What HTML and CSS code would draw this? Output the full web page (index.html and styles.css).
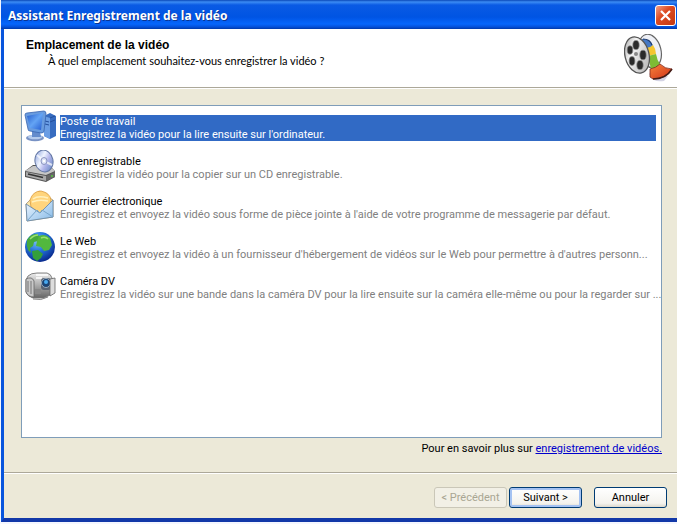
FILE: index.html
```html
<!doctype html>
<html lang="fr" >
<head>
<meta charset="utf-8" >
<meta name="viewport" content="width=device-width,initial-scale=1" >
<title>Assistant Enregistrement de la vidéo</title>
<link rel="stylesheet" href="styles.css" >
</head>
<body>

	<main class="wizard" >

		<div class="titlebar" >
			<h1>Assistant Enregistrement de la vidéo</h1>
			<button class="close" type="button" aria-label="Fermer" >
				<svg viewBox="0 0 21 21" width="21" height="21" ><path d="M6 6l9 9M15 6l-9 9" stroke="#fff" stroke-width="2.2" /></svg>
			</button>
		</div>

		<header class="banner" >
			<div class="heading" >
				<h2>Emplacement de la vidéo</h2>
				<p>À quel emplacement souhaitez-vous enregistrer la vidéo ?</p>
			</div>
			<svg class="logo" viewBox="0 0 50 50" width="50" height="50" >
				<defs>
					<linearGradient id="reel" x1="0" y1="0" x2="1" y2="1" ><stop offset="0" stop-color="#999" /><stop offset=".35" stop-color="#f4f4f4" /><stop offset="1" stop-color="#aaa" /></linearGradient>
					<linearGradient id="red" x1="0" y1="0" x2="1" y2="1" ><stop offset="0" stop-color="#f8843c" /><stop offset="1" stop-color="#d03018" /></linearGradient>
				</defs>
				<path d="M25 40q4 9 15 7l4-5-16-6z" fill="#d4d4e4" />
				<ellipse cx="26" cy="17" rx="11" ry="17" transform="rotate(-14 26 17)" fill="#eef0f6" stroke="#666" stroke-width="1.2" />
				<path d="M18 5q8-1 11 7l-3 6-8-6z" fill="#4478c4" />
				<path d="M19 5q7 0 9 6" fill="none" stroke="#1c3768" stroke-width="1.2" />
				<path d="M22 14q4 0 7-3 3 4 3 9l-8 2z" fill="#f4c630" />
				<path d="M24 22l8-2q1 6 4 10-4 4-9 5z" fill="#7dbb34" />
				<path d="M26 35q6-1 10-5 5 5 12 5-6 10-19 10l-3-2z" fill="url(#red)" stroke="#7c281c" stroke-width=".8" />
				<path d="M48 35q-6 10-19 10" fill="none" stroke="#461e18" stroke-width="1.6" />
				<ellipse cx="13" cy="21" rx="12" ry="18.5" transform="rotate(-14 13 21)" fill="url(#reel)" stroke="#555" stroke-width="1.3" />
				<g fill="#2b2b2b" stroke="#888" stroke-width=".7" >
					<ellipse cx="12" cy="11" rx="3.2" ry="4.6" /><ellipse cx="6" cy="16" rx="2.8" ry="4.2" />
					<ellipse cx="19" cy="21" rx="3.2" ry="4.8" /><ellipse cx="8" cy="27" rx="2.9" ry="4.4" />
					<ellipse cx="16" cy="31" rx="3.2" ry="4.6" />
				</g>
				<circle cx="12" cy="20" r="2" fill="#888" />
			</svg>
		</header>

		<form class="page" >

			<div class="places" role="radiogroup" aria-label="Emplacement de la vidéo" >

				<label class="place" >
					<input type="radio" name="place" checked >
					<svg viewBox="0 0 32 32" width="32" height="32" >
						<defs><linearGradient id="screen" x1="0" y1="0" x2="1" y2="1" ><stop offset="0" stop-color="#245ccc" /><stop offset=".5" stop-color="#64a4f4" /><stop offset="1" stop-color="#235bd0" /></linearGradient></defs>
						<path d="M20 6l6-3 6 3v20l-6 3-6-3z" fill="#376cc0" /><path d="M20 6l6 2v21l-6-3z" fill="#6a9de4" />
						<path d="M26 8l5-2M21 11l4 1M21 14l4 1M26 12l5-2" stroke="#244f9c" />
						<ellipse cx="11" cy="28" rx="9" ry="3.3" fill="#7892c4" /><ellipse cx="11" cy="27" rx="7" ry="2.3" fill="#b4cbed" />
						<path d="M8 21l8 1 1 5H8z" fill="#648ccc" />
						<path d="M1 5q0-2 2-2l17-2q2 0 2 3l-2 17q0 2-3 2L6 21q-2 0-2-2z" fill="#699cdf" stroke="#3864b0" stroke-width=".8" />
						<path d="M3 6l16-3-2 17-11-2z" fill="url(#screen)" />
					</svg>
					<span class="text" ><span class="name" >Poste de travail</span><span class="hint" >Enregistrez la vidéo pour la lire ensuite sur l'ordinateur.</span></span>
				</label>

				<label class="place" >
					<input type="radio" name="place" >
					<svg viewBox="0 0 32 32" width="32" height="32" >
						<defs><linearGradient id="disc" x1="0" y1="0" x2="1" y2="1" ><stop offset="0" stop-color="#7c94d8" /><stop offset=".4" stop-color="#eff4ff" /><stop offset=".6" stop-color="#b5b8ec" /><stop offset="1" stop-color="#527bb8" /></linearGradient></defs>
						<path d="M1 21l8-6h16l6 6v6l-9 5-21-5z" fill="#555" />
						<path d="M1 21l8-5h16l6 5-9 4z" fill="#c6c6c6" />
						<path d="M2 22l20 4v5L2 26z" fill="#aaa" /><path d="M4 24l15 3.5" stroke="#333" stroke-width="1.5" />
						<path d="M22 26l9-4v5l-9 4z" fill="#666" />
						<ellipse cx="20" cy="11" rx="9" ry="11" transform="rotate(-12 20 11)" fill="url(#disc)" stroke="#6478a4" />
						<path d="M20 11L13 5M20 11l8 4" stroke="#fff" stroke-width="2" opacity=".7" />
						<ellipse cx="20" cy="11" rx="3" ry="3.5" fill="#dde3f6" stroke="#8a94c0" /><circle cx="20" cy="11" r="1.2" fill="#fff" />
						<circle cx="28" cy="26" r="1" fill="#58c840" />
					</svg>
					<span class="text" ><span class="name" >CD enregistrable</span><span class="hint" >Enregistrer la vidéo pour la copier sur un CD enregistrable.</span></span>
				</label>

				<label class="place" >
					<input type="radio" name="place" >
					<svg viewBox="0 0 32 32" width="32" height="32" >
						<defs><linearGradient id="mail" x1="0" y1="0" x2="1" y2="1" ><stop offset="0" stop-color="#f1f8ff" /><stop offset="1" stop-color="#86bae8" /></linearGradient></defs>
						<path d="M2 14L15 1l14 9v17L3 31z" fill="#f8e4a8" stroke="#a89470" stroke-width=".8" />
						<path d="M6 10q3-9 11-9 9 2 10 9l-2 7-9 6-9-6z" fill="#ffd47c" stroke="#d99b40" stroke-width=".8" />
						<path d="M9 9q5-4 15-1M8 12q7-3 16-1" fill="none" stroke="#fff0be" stroke-width="1.5" />
						<path d="M2 14l14 9 13-13v17L3 31z" fill="url(#mail)" stroke="#6c8caa" stroke-width=".9" />
						<path d="M3 31l10-11 3 3 2-3 11 7" fill="none" stroke="#78a6cc" />
					</svg>
					<span class="text" ><span class="name" >Courrier électronique</span><span class="hint" >Enregistrez et envoyez la vidéo sous forme de pièce jointe à l'aide de votre programme de messagerie par défaut.</span></span>
				</label>

				<label class="place" >
					<input type="radio" name="place" >
					<svg viewBox="0 0 32 32" width="32" height="32" >
						<defs><radialGradient id="globe" cx=".4" cy=".3" r=".7" ><stop offset="0" stop-color="#7cc4fc" /><stop offset=".5" stop-color="#2473dc" /><stop offset="1" stop-color="#0a2c90" /></radialGradient></defs>
						<circle cx="16" cy="17" r="15" fill="url(#globe)" />
						<path d="M3 10q4-7 10-6l3 3-2 4-4 1-1 4-3 2 1 5-3-3q-2-5-1-10z" fill="#46aa3c" />
						<path d="M15 6q6-3 11 2l2 7-3 5-5 1-3-4-5-1 1-5z" fill="#52b83e" />
						<path d="M8 21l6-1 5 4-2 4-4 3-4-3z" fill="#34a03a" />
						<path d="M6 9q4-4 8-4M17 8q4-2 7 1" fill="none" stroke="#9ae070" stroke-width="1.4" />
					</svg>
					<span class="text" ><span class="name" >Le Web</span><span class="hint" >Enregistrez et envoyez la vidéo à un fournisseur d'hébergement de vidéos sur le Web pour permettre à d'autres personn...</span></span>
				</label>

				<label class="place" >
					<input type="radio" name="place" >
					<svg viewBox="0 0 32 32" width="32" height="32" >
						<defs><linearGradient id="body" x1="0" y1="0" x2="0" y2="1" ><stop offset="0" stop-color="#ececec" /><stop offset=".5" stop-color="#aaa" /><stop offset="1" stop-color="#666" /></linearGradient></defs>
						<path d="M4 6q3-3 9-3h10q4 1 5 5v16l-8 4H9q-6-2-7-6V10z" fill="url(#body)" stroke="#777" stroke-width=".9" />
						<path d="M2 9q6-3 8 2v16q-6 0-8-5z" fill="#c8c8c8" stroke="#666" stroke-width=".8" />
						<path d="M4 11v11M7 11v13" stroke="#777" />
						<path d="M12 5h12M12 8h6" stroke="#fff" stroke-width="1.5" />
						<rect x="17" y="8" width="10" height="12" rx="3" fill="#5b6472" /><circle cx="22" cy="13" r="4.5" fill="#1c4474" stroke="#9ab" /><circle cx="22" cy="12" r="2" fill="#48aaf0" />
						<path d="M26 9l5-1v15l-5 3z" fill="#ddd" stroke="#666" stroke-width=".8" /><path d="M11 19h6v5h-6z" fill="#888" />
						<path d="M9 29q8 2 15-2" fill="none" stroke="#888" />
					</svg>
					<span class="text" ><span class="name" >Caméra DV</span><span class="hint" >Enregistrez la vidéo sur une bande dans la caméra DV pour la lire ensuite sur la caméra elle-même ou pour la regarder sur ...</span></span>
				</label>

			</div>

			<p class="more" >Pour en savoir plus sur <a href="#" >enregistrement de vidéos.</a></p>

			<div class="actions" >
				<button type="button" disabled >&lt; Précédent</button>
				<button type="button" class="default" >Suivant &gt;</button>
				<button type="button" class="cancel" >Annuler</button>
			</div>

		</form>

	</main>

</body>
</html>
```
FILE: styles.css
```css
* { box-sizing: border-box; }

body { background: #f4f6ff; color: #000; font: 11px/13px Roboto, sans-serif; margin: 0; padding: 0 0 2px 1px; }
h1, h2, p { margin: 0; }
button { font: 11px/14px Roboto, sans-serif; }

.wizard { background: #ece9d8; border-bottom: 4px solid #1238a8; border-left: 3px solid #0855dd; display: flex; flex-direction: column; height: calc(100vh - 2px); min-height: 380px; }

.titlebar { align-items: center; background: linear-gradient(#0a48b8, #3c8cf4 2px, #0a5ae4 5px, #0054e3 17px, #0666fc 24px, #0450d8 27px, #0038a8); display: flex; height: 29px; justify-content: space-between; margin-left: -3px; padding: 2px 1px 0 7px; }
.titlebar h1 { color: #fff; font: bold 12px/16px "Noto Sans", sans-serif; text-shadow: 1px 1px #0c3490; }
.close { background: linear-gradient(135deg, #f0a088, #dd4c24 40%, #c43810); border: 1px solid #fff; border-radius: 3px; height: 21px; padding: 0; width: 21px; }
.close svg { display: block; margin: -1px; }

.banner { background: #fff; border-bottom: 1px solid #aca899; box-shadow: 0 1px #fff; display: flex; height: 59px; justify-content: space-between; }
.heading { font: 11px/15px Lato, sans-serif; padding: 9px 0 0 22px; }
.heading h2 { font: bold 12px/15px "Liberation Sans", Arial, sans-serif; }
.heading p { padding-left: 22px; }
.logo { margin: 5px 3px 0 0; }

.page { display: flex; flex: 1; flex-direction: column; min-height: 0; }

.places { background: #fff; border: 1px solid #7f9db9; flex: 1; margin: 17px 15px 0 17px; overflow: hidden; padding: 4px 5px 0 2px; }
.place { align-items: center; display: flex; gap: 4px; height: 40px; padding-bottom: 8px; }
.place input { appearance: none; height: 0; margin: 0 -4px 0 0; width: 0; }
.place svg { flex: none; }
.text { flex: 1; margin-top: 3px; min-width: 0; }
.name, .hint { display: block; white-space: nowrap; }
.hint { color: #808080; }
.place input:checked ~ .text { background: #316ac5; color: #fff; }
.place input:checked ~ .text .hint { color: #fff; }

.more { padding: 4px 15px 17px; text-align: right; }
.more a { color: #00c; }

.actions { border-top: 1px solid #aca899; box-shadow: inset 0 1px #fff; display: flex; justify-content: flex-end; padding: 14px 10px 10px; }
.actions button { background: linear-gradient(#fff, #f4f3ee 80%, #dcd8cc); border: 1px solid #003c74; border-radius: 3px; color: #000; height: 21px; padding: 0; width: 73px; }
.actions .default { box-shadow: inset 0 0 0 2px #a4c2f2; margin: 0 12px 0 2px; }
.actions button:disabled { background: #f2f0e6; border-color: #cac7b8; color: #a9a693; }
```
